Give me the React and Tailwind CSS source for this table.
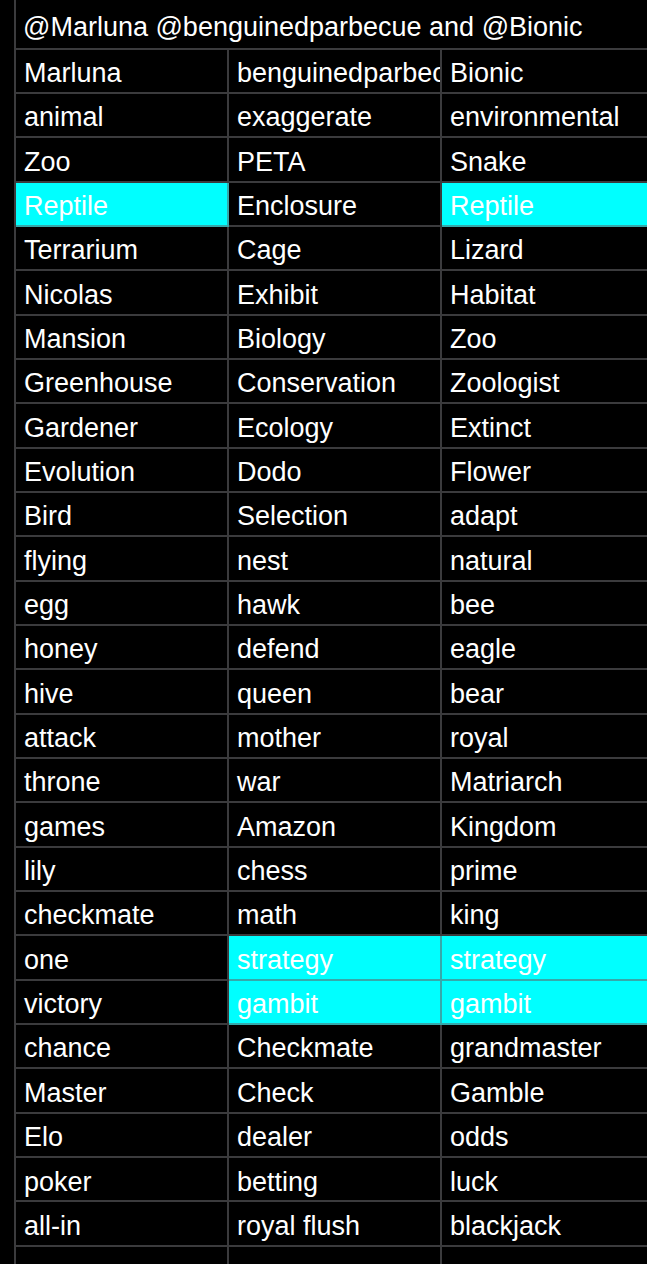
import React from 'react';

const rows = [
  ['Marluna', 'benguinedparbecue', 'Bionic'],
  ['animal', 'exaggerate', 'environmental'],
  ['Zoo', 'PETA', 'Snake'],
  ['Reptile', 'Enclosure', 'Reptile'],
  ['Terrarium', 'Cage', 'Lizard'],
  ['Nicolas', 'Exhibit', 'Habitat'],
  ['Mansion', 'Biology', 'Zoo'],
  ['Greenhouse', 'Conservation', 'Zoologist'],
  ['Gardener', 'Ecology', 'Extinct'],
  ['Evolution', 'Dodo', 'Flower'],
  ['Bird', 'Selection', 'adapt'],
  ['flying', 'nest', 'natural'],
  ['egg', 'hawk', 'bee'],
  ['honey', 'defend', 'eagle'],
  ['hive', 'queen', 'bear'],
  ['attack', 'mother', 'royal'],
  ['throne', 'war', 'Matriarch'],
  ['games', 'Amazon', 'Kingdom'],
  ['lily', 'chess', 'prime'],
  ['checkmate', 'math', 'king'],
  ['one', 'strategy', 'strategy'],
  ['victory', 'gambit', 'gambit'],
  ['chance', 'Checkmate', 'grandmaster'],
  ['Master', 'Check', 'Gamble'],
  ['Elo', 'dealer', 'odds'],
  ['poker', 'betting', 'luck'],
  ['all-in', 'royal flush', 'blackjack'],
  ['', '', ''],
];

// cells that are filled cyan, keyed "row-col"
const highlighted = new Set(['3-0', '3-2', '20-1', '20-2', '21-1', '21-2']);

const App = () => {
  return (
    <div
      className="flex h-[1264px] w-[647px] overflow-hidden bg-black text-[27px] text-white"
      style={{ fontFamily: '"Liberation Sans", Arial, sans-serif' }}
    >
      {/* row header strip */}
      <div className="h-full w-[16px] shrink-0 border-r-2 border-[#3b3b3d]" />

      <div className="grid shrink-0 grid-cols-[213px_213px_213px] content-start">
        {/* merged title row */}
        <div className="col-span-3 flex h-[49.5px] items-center whitespace-nowrap border-b-2 border-[#3b3b3d] pl-[7px] pt-[7px]">
          @Marluna @benguinedparbecue and @Bionic
        </div>

        {rows.map((row, r) =>
          row.map((text, c) => (
            <div
              key={`${r}-${c}`}
              className={`flex h-[44.35px] items-center overflow-hidden whitespace-nowrap border-b-2 border-r-2 pl-[8px] pt-[5px] ${
                highlighted.has(`${r}-${c}`)
                  ? 'border-[#35a9ab] bg-[#00ffff]'
                  : 'border-[#3b3b3d]'
              }`}
            >
              {text}
            </div>
          ))
        )}
      </div>
    </div>
  );
};

export default App;
